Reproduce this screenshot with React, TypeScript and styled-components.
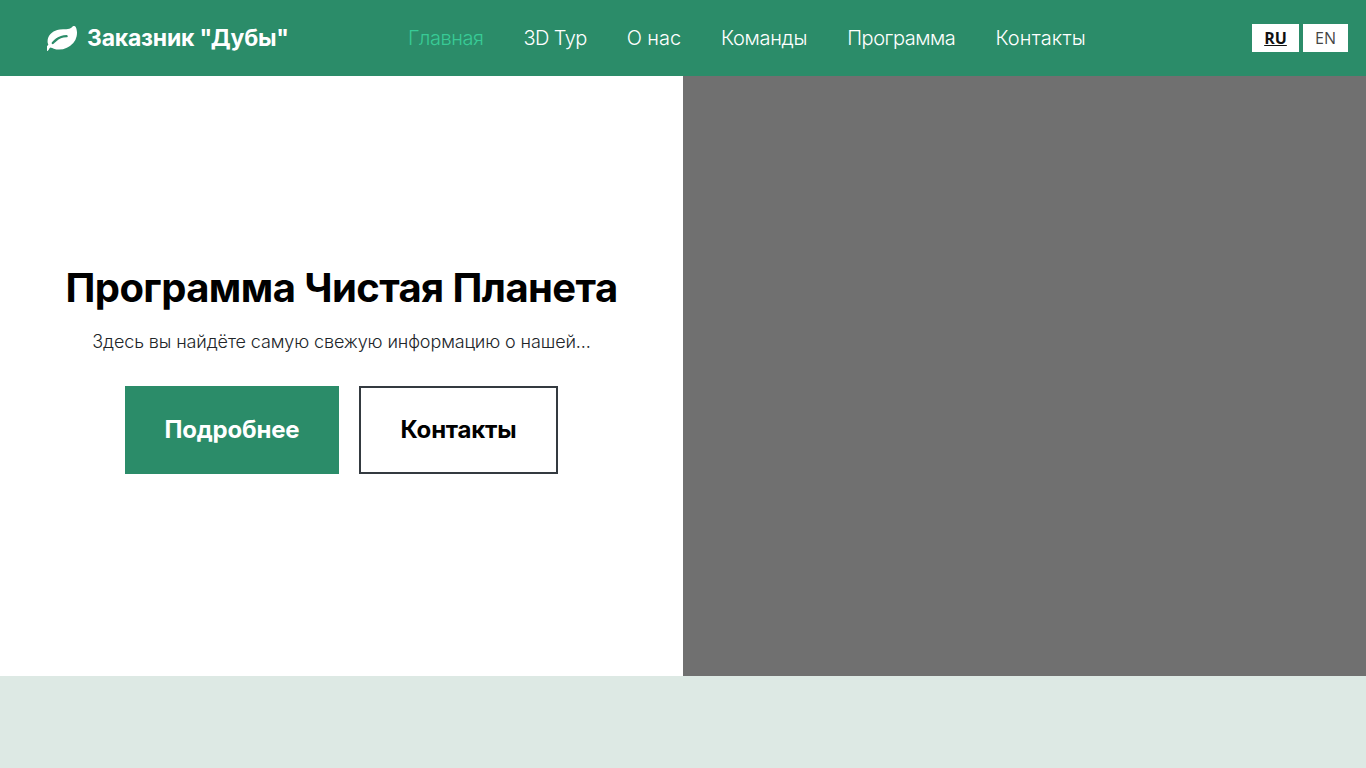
import React from "react";
import styled, { createGlobalStyle } from "styled-components";

const Global = createGlobalStyle`
  html, body { margin: 0; padding: 0; background: #fff; overflow: hidden; }
  * { box-sizing: border-box; }
  body { font-family: Inter, "Noto Sans", sans-serif; }
`;

const Page = styled.div`
  width: 1366px;
  height: 768px;
  display: flex;
  flex-direction: column;
`;

const Header = styled.header`
  height: 76px;
  flex: none;
  background: #2b8c69;
  display: grid;
  grid-template-columns: 408px 1fr auto;
  align-items: center;
  padding-right: 18px;
`;

const Brand = styled.a`
  display: flex;
  align-items: center;
  gap: 10px;
  padding-left: 47px;
  color: #fff;
  font-size: 23px;
  font-weight: 700;
  letter-spacing: -0.22px;
  white-space: nowrap;
`;

const LeafIcon = styled.svg`
  width: 30px;
  height: 25px;
  flex: none;
  fill: currentColor;
`;

const Nav = styled.nav`
  display: flex;
  align-items: center;
  gap: 40px;
`;

const NavLink = styled.a<{ $active?: boolean; $track: number }>`
  color: ${(p) => (p.$active ? "#38cb96" : "#fff")};
  font-size: 20px;
  font-weight: 300;
  letter-spacing: ${(p) => p.$track}px;
  white-space: nowrap;
`;

const Langs = styled.div`
  display: flex;
  gap: 4px;
`;

const Lang = styled.a<{ $active?: boolean }>`
  height: 28px;
  width: ${(p) => (p.$active ? "47px" : "45px")};
  background: #fff;
  display: flex;
  align-items: center;
  justify-content: center;
  font-family: "Open Sans", sans-serif;
  font-size: 16px;
  font-weight: ${(p) => (p.$active ? 700 : 400)};
  color: ${(p) => (p.$active ? "#111" : "#444")};
  text-decoration: ${(p) => (p.$active ? "underline" : "none")};
`;

const Hero = styled.section`
  height: 600px;
  flex: none;
  display: grid;
  grid-template-columns: 683px 683px;
`;

const Copy = styled.div`
  display: flex;
  flex-direction: column;
  align-items: center;
  justify-content: center;
  padding-bottom: 16px;
`;

const Title = styled.h1`
  margin: 1px 0 0;
  font-size: 40px;
  line-height: 48px;
  font-weight: 700;
  letter-spacing: -0.58px;
  color: #000;
  white-space: nowrap;
`;

const Lead = styled.p`
  margin: 17px 0 0;
  font-size: 18px;
  line-height: 26px;
  font-weight: 300;
  letter-spacing: -0.12px;
  color: #212529;
  white-space: nowrap;
`;

const Actions = styled.div`
  margin-top: 31px;
  display: flex;
  gap: 20px;
`;

const Button = styled.a<{ $outline?: boolean }>`
  height: 88px;
  width: ${(p) => (p.$outline ? "199px" : "214px")};
  display: flex;
  align-items: center;
  justify-content: center;
  font-size: 24px;
  font-weight: 700;
  letter-spacing: -0.2px;
  background: ${(p) => (p.$outline ? "#fff" : "#2b8c69")};
  color: ${(p) => (p.$outline ? "#000" : "#fff")};
  border: ${(p) => (p.$outline ? "2px solid #343a40" : "none")};
`;

const Media = styled.div`
  background: #707070;
`;

const Band = styled.div`
  flex: 1;
  background: #dde9e4;
`;

const links = [
  { label: "Главная", track: -0.45, active: true },
  { label: "3D Тур", track: -0.6 },
  { label: "О нас", track: -0.05 },
  { label: "Команды", track: -0.3 },
  { label: "Программа", track: -0.45 },
  { label: "Контакты", track: 0.15 },
];

export default function App() {
  return (
    <Page>
      <Global />
      <Header>
        <Brand>
          <LeafIcon viewBox="128 128 1664 1408" preserveAspectRatio="none">
            <path d="M1280 704q0-26-19-45t-45-19q-172 0-318 49.5t-259.5 134-235.5 219.5q-19 21-19 45t19 45 45 19q24 0 45-19 27-24 74-71t67-66q137-124 268.5-176t313.5-52q26 0 45-19t19-45zm512-198q0 95-20 193-46 224-184.5 383t-357.5 268q-214 108-438 108-148 0-286-47-15-5-88-42t-96-37q-16 0-39.5 32t-45 70-52.5 70-60 32q-43 0-63.5-17.5t-45.5-59.5q-2-4-6-11t-5.5-10-3-9.5-1.5-13.5q0-35 31-73.5t68-65.5 68-56 31-48q0-4-14-38t-16-44q-9-51-9-104 0-115 43.5-220t119-184.5 170.5-139 204-95.5q55-18 145-25.5t179.5-9 178.5-6 163.5-24 113.5-56.5l29.5-29.5 29.5-28 27-20 36.5-16 43.5-4.5q39 0 70.5 46t47.5 112 24 124 8 96z" />
          </LeafIcon>
          Заказник "Дубы"
        </Brand>
        <Nav>
          {links.map((l) => (
            <NavLink key={l.label} $active={l.active} $track={l.track}>
              {l.label}
            </NavLink>
          ))}
        </Nav>
        <Langs>
          <Lang $active>RU</Lang>
          <Lang>EN</Lang>
        </Langs>
      </Header>
      <Hero>
        <Copy>
          <Title>Программа Чистая Планета</Title>
          <Lead>Здесь вы найдёте самую свежую информацию о нашей...</Lead>
          <Actions>
            <Button>Подробнее</Button>
            <Button $outline>Контакты</Button>
          </Actions>
        </Copy>
        <Media />
      </Hero>
      <Band />
    </Page>
  );
}
